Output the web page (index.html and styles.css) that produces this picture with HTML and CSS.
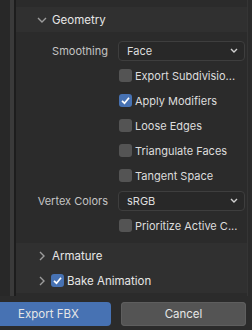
FILE: index.html
```html
<!DOCTYPE html>
<html lang="en">
<head>
  <meta charset="UTF-8">
  <title>Export FBX</title>
<link rel="stylesheet" href="styles.css">
</head>
<body>

<div class="window">
  <div class="area">
    <div class="gutter"></div>
    <div class="rail"></div>
    <div class="edge"></div>

    <div class="panel">
      <div class="top-gap"></div>

      <div class="header">
        <span class="chevron"><svg width="10" height="6" viewBox="0 0 10 6"><path d="M1 1 L5 5 L9 1" /></svg></span>
        <span class="title">Geometry</span>
      </div>

      <div class="body">
        <div class="row">
          <span class="label">Smoothing</span>
          <div class="select"><span>Face</span><svg width="8" height="5" viewBox="0 0 8 5"><path d="M1 1 L4 4 L7 1" /></svg></div>
        </div>
        <div class="row">
          <span></span>
          <div class="check"><span class="box"></span><span>Export Subdivisio...</span></div>
        </div>
        <div class="row">
          <span></span>
          <div class="check"><span class="box on"><svg width="11" height="11" viewBox="0 0 11 11"><path d="M2 5.8 L4.5 8.2 L9 2.8" /></svg></span><span>Apply Modifiers</span></div>
        </div>
        <div class="row">
          <span></span>
          <div class="check"><span class="box"></span><span>Loose Edges</span></div>
        </div>
        <div class="row">
          <span></span>
          <div class="check"><span class="box"></span><span>Triangulate Faces</span></div>
        </div>
        <div class="row">
          <span></span>
          <div class="check"><span class="box"></span><span>Tangent Space</span></div>
        </div>
        <div class="row">
          <span class="label">Vertex Colors</span>
          <div class="select"><span>sRGB</span><svg width="8" height="5" viewBox="0 0 8 5"><path d="M1 1 L4 4 L7 1" /></svg></div>
        </div>
        <div class="row">
          <span></span>
          <div class="check"><span class="box"></span><span>Prioritize Active C...</span></div>
        </div>
      </div>

      <div class="header closed">
        <span class="chevron"><svg width="6" height="10" viewBox="0 0 6 10"><path d="M1 1 L5 5 L1 9" /></svg></span>
        <span class="title">Armature</span>
      </div>
      <div class="header closed">
        <span class="chevron"><svg width="6" height="10" viewBox="0 0 6 10"><path d="M1 1 L5 5 L1 9" /></svg></span>
        <span class="box on"><svg width="11" height="11" viewBox="0 0 11 11"><path d="M2 5.8 L4.5 8.2 L9 2.8" /></svg></span>
        <span class="title">Bake Animation</span>
      </div>
    </div>

    <div class="scrollbar"></div>
  </div>

  <div class="footer">
    <div class="button primary">Export FBX</div>
    <div class="button">Cancel</div>
  </div>
</div>

</body>
</html>
```

FILE: styles.css
```css
body {
  margin: 0px;
  overflow: hidden;
  background-color: #2b2b2b;

  font-family: 'Inter', 'DejaVu Sans', sans-serif;
  font-size: 11px;
  color: #dddddd;
  white-space: nowrap;
}

.window {
  width: 252px;
  height: 330px;
  display: flex;
  flex-direction: column;
}

.area {
  display: flex;
  height: 296px;
}

.gutter  { width: 10px; background-color: #282828; }
.rail    { width: 4px;  background-color: #3a3a3a; }
.edge    { width: 2px;  background-color: #1d1d1d; }

.panel {
  flex: 1;
  background-color: #2b2b2b;
  display: flex;
  flex-direction: column;
}

.scrollbar {
  width: 4px;
  background-color: #2b2b2b;
  border-left: 1px solid #353535;
}

.top-gap { height: 7px; }

.header {
  height: 25px;
  display: flex;
  align-items: center;
  background-color: #303030;
  padding-left: 21px;
}

.header .title {
  color: #e6e6e6;
  margin-left: 5px;
  font-size: 11.5px;
}

.header .box { margin-left: 4px; }
.header .box + .title { margin-left: 3px; }

.chevron {
  width: 10px;
  display: flex;
  justify-content: center;
}

.chevron path, .select path {
  fill: none;
  stroke: #9c9c9c;
  stroke-width: 1.4;
}

.select path { stroke: #d0d0d0; }

.body {
  padding: 6px 0px 5px 0px;
}

.row {
  height: 25px;
  display: grid;
  grid-template-columns: 92px 1fr;
  column-gap: 10px;
  align-items: center;
  padding-right: 2px;
}

.label {
  text-align: right;
  color: #c4c4c4;
}

.select {
  height: 18px;
  background-color: #282828;
  border: 1px solid #3e3e3e;
  border-radius: 4px;
  display: flex;
  align-items: center;
  justify-content: space-between;
  padding: 0px 6px 0px 8px;
}

.check {
  display: flex;
  align-items: center;
  padding-left: 1px;
}

.check .box { margin-right: 3px; }

.box {
  width: 13px;
  height: 13px;
  border-radius: 3px;
  background-color: #545454;
  display: flex;
  align-items: center;
  justify-content: center;
  flex-shrink: 0;
}

.box.on { background-color: #4772b3; }

.box path {
  fill: none;
  stroke: #ffffff;
  stroke-width: 1.7;
}

.footer {
  flex: 1;
  display: flex;
  gap: 10px;
  padding-top: 6px;
  margin-left: -14px;
}

.button {
  width: 125px;
  height: 24px;
  border-radius: 4px;
  background-color: #545454;
  box-shadow: inset 0px 0px 0px 1px #5e5e5e;
  display: flex;
  align-items: center;
  justify-content: center;
  color: #e6e6e6;
  font-size: 11.5px;
}

.button.primary {
  background-color: #4772b3;
  box-shadow: none;
}
```
